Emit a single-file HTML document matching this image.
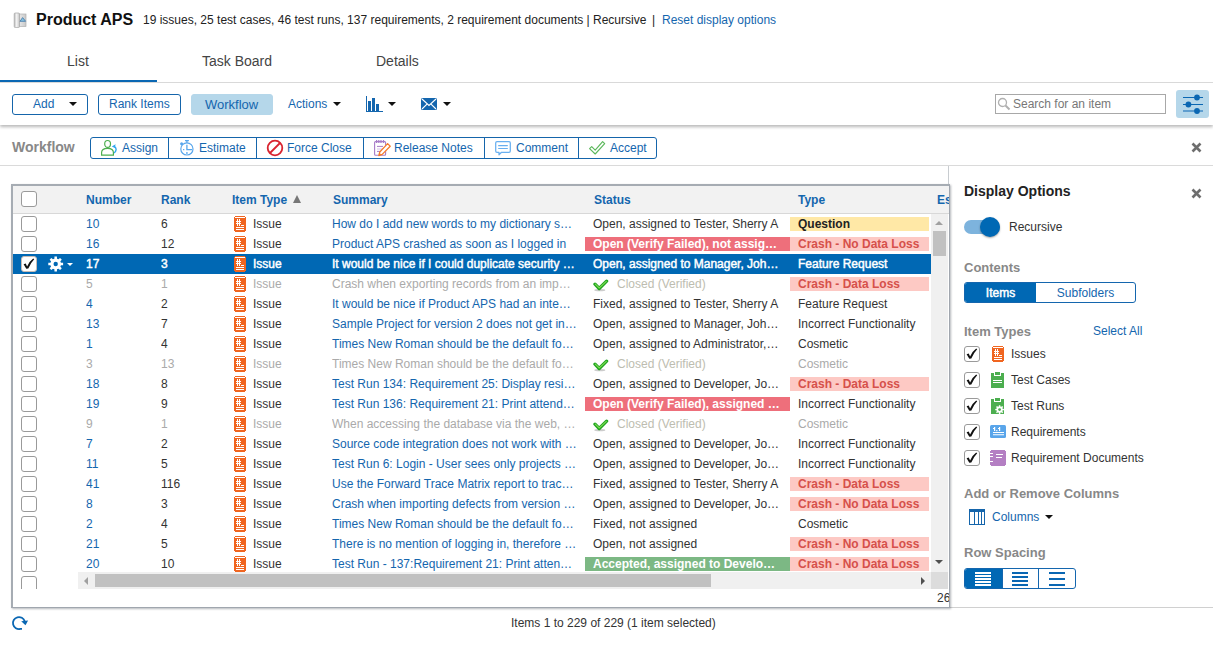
<!DOCTYPE html>
<html><head><meta charset="utf-8">
<style>
*{box-sizing:border-box;}
html,body{margin:0;padding:0;background:#fff;width:1213px;height:645px;overflow:hidden;}
body{font-family:"Liberation Sans",sans-serif;font-size:12px;color:#333;position:relative;}
.a{position:absolute;white-space:nowrap;}
.blue{color:#1466ae;}
.btn{position:absolute;height:21px;border:1px solid #1565ab;border-radius:3px;color:#1466ae;font-size:12px;line-height:19px;}
.caret{position:absolute;width:0;height:0;border-left:4px solid transparent;border-right:4px solid transparent;border-top:4px solid #111;}
/* grid */
#grid{position:absolute;left:11px;top:184px;width:939px;height:424px;border:2px solid #a6acb3;border-right:1px solid #a0a6ae;border-bottom:1px solid #a0a6ae;background:#fff;box-shadow:0.5px 0.5px 2px rgba(40,50,60,0.35);overflow:hidden;z-index:2;}
.hdr{position:absolute;left:0;top:0;width:936px;height:28px;background:#f2f2f2;border-bottom:1px solid #d8d8d8;}
.hdr span{position:absolute;top:7px;font-weight:bold;color:#1466ae;font-size:12px;line-height:14px;}
.row{position:absolute;left:0;width:919px;height:20px;font-size:12px;line-height:20px;color:#333;}
.row>span{position:absolute;top:0;height:20px;white-space:nowrap;overflow:hidden;}
.cb{position:absolute;width:16px;height:16px;border:1px solid #9a9a9a;border-radius:3px;background:#fff;}
.row .cb{left:8px;top:2px;}
.num{left:73px;width:70px;color:#1466ae;}
.rank{left:148px;width:70px;}
.it{left:221px;width:90px;}
.sum{left:319px;width:256px;color:#1466ae;}
.st{left:572px;width:205px;padding-left:8px;}
.ty{left:777px;width:139px;padding-left:8px;}
.row>span.badge{top:3px;height:14px;line-height:14px;font-weight:bold;}
.r-red{background:#ee6f7b;color:#fff;}
.r-pink{background:#fdc9c4;color:#d6504a;}
.r-yel{background:#ffe8a6;color:#222;}
.r-grn{background:#7cb884;color:#fff;}
.gray>span.num,.gray>span.rank,.gray .itxt,.gray>span.sum,.gray>span.ty:not(.badge){color:#aaa!important;}
.closed{color:#bdbdb0!important;}
.sel{background:#0068b4;}
.sel>span,.sel>span>span{color:#fff!important;-webkit-text-stroke:0.45px #fff;}
.issue{position:absolute;left:0;top:2px;}
.itxt{position:absolute;left:19px;top:0;}
/* panel */
#panel{position:absolute;left:948px;top:166px;width:265px;height:442px;border-left:1px solid #c8ccd0;border-bottom:1px solid #d0d0d0;background:#fff;}
.ph{position:absolute;left:15px;font-weight:bold;color:#888;font-size:13px;white-space:nowrap;}
.pcb{position:absolute;left:15px;width:16px;height:16px;border:1px solid #9a9a9a;border-radius:3px;background:#fff;}
.pl{position:absolute;left:62px;font-size:12px;color:#333;white-space:nowrap;}
</style></head><body>

<!-- header -->
<svg class="a" style="left:13px;top:12px" width="14" height="16" viewBox="0 0 14 16">
 <defs><linearGradient id="pg" x1="0" x2="1"><stop offset="0" stop-color="#b8b8b8"/><stop offset=".45" stop-color="#f4f4f4"/><stop offset="1" stop-color="#c4c4c4"/></linearGradient>
 <linearGradient id="pg2" x1="0" x2="1"><stop offset="0" stop-color="#e8e8e8"/><stop offset="1" stop-color="#c8c8c8"/></linearGradient></defs>
 <rect x="6" y="2" width="7" height="12.5" fill="url(#pg2)" stroke="#b0b0b0" stroke-width=".7"/>
 <rect x="1.2" y="1" width="5.3" height="14.5" rx="1" fill="url(#pg)" stroke="#a8a8a8" stroke-width=".7"/>
 <path d="M7 9.3 L9.6 5.6 L12.6 9.3 Z" fill="#86c3e0" stroke="#4d7fae" stroke-width=".9" stroke-linejoin="round"/>
</svg>
<div class="a" style="left:36px;top:10px;font-size:16px;font-weight:bold;color:#111;line-height:19px;">Product APS</div>
<div class="a" style="left:143px;top:13px;font-size:12px;color:#222;line-height:15px;">19 issues, 25 test cases, 46 test runs, 137 requirements, 2 requirement documents | Recursive</div>
<div class="a" style="left:652px;top:13px;font-size:12px;color:#222;line-height:15px;">|</div>
<div class="a blue" style="left:662px;top:13px;font-size:12px;line-height:15px;">Reset display options</div>

<!-- tabs -->
<div class="a" style="left:67px;top:53px;font-size:14px;color:#444;line-height:16px;">List</div>
<div class="a" style="left:202px;top:53px;font-size:14px;color:#444;line-height:16px;">Task Board</div>
<div class="a" style="left:376px;top:53px;font-size:14px;color:#444;line-height:16px;">Details</div>
<div class="a" style="left:0;top:82px;width:1213px;height:1px;background:#dcdcdc;"></div>
<div class="a" style="left:0;top:80px;width:157px;height:2px;background:#0a67b3;"></div>

<!-- toolbar -->
<div class="a" style="left:0;top:83px;width:1213px;height:42px;background:#fff;box-shadow:0 2px 3px rgba(0,0,0,0.28);"></div>
<div class="btn" style="left:12px;top:94px;width:76px;"><span class="a" style="left:20px;top:0;">Add</span><span class="caret" style="left:56px;top:7px;"></span></div>
<div class="btn" style="left:98px;top:94px;width:83px;"><span class="a" style="left:10px;top:0;">Rank Items</span></div>
<div class="btn" style="left:191px;top:94px;width:82px;background:#b5d7ea;border-color:#b5d7ea;"><span class="a" style="left:13px;top:0px;font-size:13px;">Workflow</span></div>
<div class="a blue" style="left:288px;top:97px;line-height:14px;">Actions</div>
<span class="caret" style="left:333px;top:102px;"></span>
<svg class="a" style="left:365px;top:96px" width="18" height="16" viewBox="0 0 18 16" shape-rendering="crispEdges">
 <rect x="1" y="0" width="1" height="16" fill="#1466ae"/><rect x="1" y="15" width="17" height="1" fill="#1466ae"/>
 <rect x="3" y="5" width="3" height="10" fill="#1466ae"/><rect x="7" y="2" width="3" height="13" fill="#1466ae"/><rect x="11" y="8" width="3" height="7" fill="#1466ae"/>
</svg>
<span class="caret" style="left:388px;top:102px;"></span>
<svg class="a" style="left:421px;top:98px" width="16" height="12" viewBox="0 0 16 12">
 <rect x="0" y="0" width="16" height="12" rx="1.5" fill="#1466ae"/>
 <path d="M1 1 L8 7.5 L15 1 M1 11 L6 6.2 M15 11 L10 6.2" fill="none" stroke="#fff" stroke-width="1.1"/>
</svg>
<span class="caret" style="left:443px;top:102px;"></span>

<div class="a" style="left:995px;top:94px;width:171px;height:20px;border:1px solid #a8a8a8;background:#fff;"></div>
<svg class="a" style="left:997px;top:97px" width="14" height="14" viewBox="0 0 14 14">
 <circle cx="5.5" cy="5.5" r="4" fill="none" stroke="#b0b0b0" stroke-width="1.3"/><path d="M8.5 8.5 L12.5 12.5" stroke="#b0b0b0" stroke-width="2"/>
</svg>
<div class="a" style="left:1013px;top:97px;color:#777;line-height:14px;">Search for an item</div>
<div class="a" style="left:1176px;top:90px;width:33px;height:28px;background:#b5d7ea;border-radius:3px;"></div>
<svg class="a" style="left:1181px;top:94px" width="24" height="20" viewBox="0 0 24 20">
 <path d="M2 3.5 H22 M2 10.5 H22 M2 17 H22" stroke="#0a67b3" stroke-width="1.1"/>
 <circle cx="16" cy="3.5" r="2.9" fill="#0a67b3"/><circle cx="7.4" cy="10.5" r="2.9" fill="#0a67b3"/><circle cx="16" cy="17" r="2.9" fill="#0a67b3"/>
</svg>

<!-- workflow bar -->
<div class="a" style="left:12px;top:139px;font-size:14px;font-weight:bold;color:#888;line-height:16px;">Workflow</div>
<div class="a" style="left:90px;top:137px;width:567px;height:22px;border:1px solid #1565ab;border-radius:3px;"></div>
<div class="a" style="left:168px;top:137px;width:1px;height:22px;background:#1565ab;"></div>
<div class="a" style="left:256px;top:137px;width:1px;height:22px;background:#1565ab;"></div>
<div class="a" style="left:363px;top:137px;width:1px;height:22px;background:#1565ab;"></div>
<div class="a" style="left:484px;top:137px;width:1px;height:22px;background:#1565ab;"></div>
<div class="a" style="left:578px;top:137px;width:1px;height:22px;background:#1565ab;"></div>
<div class="a blue" style="left:122px;top:141px;line-height:14px;">Assign</div>
<div class="a blue" style="left:199px;top:141px;line-height:14px;">Estimate</div>
<div class="a blue" style="left:287px;top:141px;line-height:14px;">Force Close</div>
<div class="a blue" style="left:394px;top:141px;line-height:14px;">Release Notes</div>
<div class="a blue" style="left:516px;top:141px;line-height:14px;">Comment</div>
<div class="a blue" style="left:610px;top:141px;line-height:14px;">Accept</div>
<!-- icons -->
<svg class="a" style="left:100px;top:139px" width="18" height="18" viewBox="0 0 18 18">
 <ellipse cx="7.6" cy="4.9" rx="2.9" ry="3.4" fill="none" stroke="#4cae4f" stroke-width="1.2"/>
 <path d="M1.6 16.2 V13.5 Q1.6 9.4 7.6 9.4 Q13.4 9.4 13.4 13.5 V16.2 Z" fill="none" stroke="#4cae4f" stroke-width="1.2"/>
 <path d="M14.2 14 Q18 10.5 14.3 7.3" fill="none" stroke="#2ea7ef" stroke-width="1.4"/><path d="M11.8 7.4 L15.6 5.3 L14.8 9.1 Z" fill="#2ea7ef"/>
</svg>
<svg class="a" style="left:179px;top:139px" width="17" height="18" viewBox="0 0 17 18">
 <circle cx="7.9" cy="9.9" r="6.1" fill="none" stroke="#58a6ec" stroke-width="1.2"/>
 <path d="M6 1.6 H9.9 M7.9 1.8 V3.8 M7.9 5.8 V10.6 H13 M4.1 10.6 H5.3" fill="none" stroke="#58a6ec" stroke-width="1.3"/>
 <circle cx="2.6" cy="4.8" r="1.5" fill="#58a6ec"/><rect x="7.1" y="13.2" width="1.6" height="1.6" fill="#58a6ec"/>
</svg>
<svg class="a" style="left:266px;top:139px" width="18" height="18" viewBox="0 0 18 18">
 <circle cx="9" cy="9" r="7.3" fill="none" stroke="#d9232f" stroke-width="1.8"/><path d="M4 14 L14 4" stroke="#d9232f" stroke-width="1.8"/>
</svg>
<svg class="a" style="left:373px;top:139px" width="18" height="18" viewBox="0 0 18 18">
 <rect x="1.6" y="2.6" width="11" height="13.6" rx="1" fill="#fff" stroke="#a77cc8" stroke-width="1.1"/>
 <path d="M3.6 1 V4 M5.8 1 V4 M8 1 V4 M10.5 1 V4" stroke="#a77cc8" stroke-width="1.2"/>
 <path d="M4 7.4 H10 M4 12.4 H8" stroke="#a77cc8" stroke-width="1"/><path d="M4 10 H10" stroke="#d6c2e6" stroke-width="1"/>
 <path d="M14.6 4.6 L17.2 7.2 L9.2 15.4 L5.8 16.6 L6.8 13 Z" fill="#fff" stroke="#f57c2c" stroke-width="1.3" stroke-linejoin="round"/>
 <path d="M5.8 16.6 L6.6 14 L8.4 15.8 Z" fill="#f57c2c"/>
</svg>
<svg class="a" style="left:494px;top:139px" width="18" height="18" viewBox="0 0 18 18">
 <path d="M3 2.7 H15 Q16.3 2.7 16.3 4 V12 Q16.3 13.3 15 13.3 H7.5 L5 15.8 V13.3 H3 Q1.7 13.3 1.7 12 V4 Q1.7 2.7 3 2.7 Z" fill="none" stroke="#68aff0" stroke-width="1.25" stroke-linejoin="round"/>
 <path d="M4.2 6.6 H13.8 M4.2 9.5 H13.8" stroke="#68aff0" stroke-width="1.1"/>
</svg>
<svg class="a" style="left:588px;top:139px" width="18" height="18" viewBox="0 0 18 18">
 <path d="M1.6 9.6 L3.7 7.6 L7.2 11.1 L14.6 2.6 L16.7 4.6 L7.2 15 Z" fill="none" stroke="#5cb85c" stroke-width="1.15" stroke-linejoin="round"/>
</svg>
<div class="a" style="left:0;top:165px;width:1213px;height:1px;background:#dadada;"></div>
<svg class="a" style="left:1191px;top:142px" width="11" height="11" viewBox="0 0 11 11"><path d="M1.5 1.5 L9.5 9.5 M9.5 1.5 L1.5 9.5" stroke="#6e6e6e" stroke-width="2.6"/></svg>

<!-- GRID -->
<div id="grid">
 <div class="hdr">
  <div class="cb" style="left:8px;top:5px;"></div>
  <span style="left:73px;">Number</span>
  <span style="left:148px;">Rank</span>
  <span style="left:219px;">Item Type</span>
  <span style="left:320px;">Summary</span>
  <span style="left:581px;">Status</span>
  <span style="left:785px;">Type</span>
  <span style="left:924px;">Es</span>
 </div>
 <div class="a" style="left:0;top:0;width:935px;height:403px;overflow:hidden;"><div class="row" style="top:28px;"><span class="num">10</span><span class="rank">6</span><span class="it"><svg class="issue" width="12" height="16" viewBox="0 0 12 16" shape-rendering="crispEdges"><path d="M1 0H11V1H12V15H11V16H1V15H0V1H1Z" fill="#f06520"/><path d="M1 1h10v1H1z M3 3h1v7H3z M5 3h1v7H5z M2 5h5v1H2z M2 7h5v1H2z M7 9h3v1H7z M2 11h8v1H2z M2 13h8v1H2z" fill="#fff"/></svg><span class="itxt">Issue</span></span><span class="sum">How do I add new words to my dictionary s…</span><span class="st">Open, assigned to Tester, Sherry A</span><span class="ty badge r-yel">Question</span></div>
<div class="row" style="top:48px;"><span class="num">16</span><span class="rank">12</span><span class="it"><svg class="issue" width="12" height="16" viewBox="0 0 12 16" shape-rendering="crispEdges"><path d="M1 0H11V1H12V15H11V16H1V15H0V1H1Z" fill="#f06520"/><path d="M1 1h10v1H1z M3 3h1v7H3z M5 3h1v7H5z M2 5h5v1H2z M2 7h5v1H2z M7 9h3v1H7z M2 11h8v1H2z M2 13h8v1H2z" fill="#fff"/></svg><span class="itxt">Issue</span></span><span class="sum">Product APS crashed as soon as I logged in</span><span class="st badge r-red">Open (Verify Failed), not assig…</span><span class="ty badge r-pink">Crash - No Data Loss</span></div>
<div class="row sel" style="top:68px;"><span class="num">17</span><span class="rank">3</span><span class="it"><svg class="issue" width="12" height="16" viewBox="0 0 12 16" shape-rendering="crispEdges"><path d="M1 0H11V1H12V15H11V16H1V15H0V1H1Z" fill="#f06520"/><path d="M1 1h10v1H1z M3 3h1v7H3z M5 3h1v7H5z M2 5h5v1H2z M2 7h5v1H2z M7 9h3v1H7z M2 11h8v1H2z M2 13h8v1H2z" fill="#fff"/></svg><span class="itxt">Issue</span></span><span class="sum">It would be nice if I could duplicate security …</span><span class="st">Open, assigned to Manager, Joh…</span><span class="ty">Feature Request</span></div>
<div class="row gray" style="top:88px;"><span class="num">5</span><span class="rank">1</span><span class="it"><svg class="issue" width="12" height="16" viewBox="0 0 12 16" shape-rendering="crispEdges"><path d="M1 0H11V1H12V15H11V16H1V15H0V1H1Z" fill="#f06520"/><path d="M1 1h10v1H1z M3 3h1v7H3z M5 3h1v7H5z M2 5h5v1H2z M2 7h5v1H2z M7 9h3v1H7z M2 11h8v1H2z M2 13h8v1H2z" fill="#fff"/></svg><span class="itxt">Issue</span></span><span class="sum">Crash when exporting records from an imp…</span><span class="st"><svg style="position:absolute;left:8px;top:5px" width="17" height="13" viewBox="0 0 17 13"><ellipse cx="6.8" cy="11.2" rx="5.5" ry="1.1" fill="#000" opacity=".2"/><path d="M2 5.2 L6.2 9.5 L13.6 2.2" fill="none" stroke="#1fa51f" stroke-width="3.3" stroke-linecap="round" stroke-linejoin="round"/><path d="M2.3 5.1 L6.2 8.9 L13.3 2.3" fill="none" stroke="#8ee45c" stroke-width="1.1" stroke-linecap="round" opacity=".85"/></svg><span class="closed" style="position:absolute;left:32px;top:0;">Closed (Verified)</span></span><span class="ty badge r-pink">Crash - Data Loss</span></div>
<div class="row" style="top:108px;"><span class="num">4</span><span class="rank">2</span><span class="it"><svg class="issue" width="12" height="16" viewBox="0 0 12 16" shape-rendering="crispEdges"><path d="M1 0H11V1H12V15H11V16H1V15H0V1H1Z" fill="#f06520"/><path d="M1 1h10v1H1z M3 3h1v7H3z M5 3h1v7H5z M2 5h5v1H2z M2 7h5v1H2z M7 9h3v1H7z M2 11h8v1H2z M2 13h8v1H2z" fill="#fff"/></svg><span class="itxt">Issue</span></span><span class="sum">It would be nice if Product APS had an inte…</span><span class="st">Fixed, assigned to Tester, Sherry A</span><span class="ty">Feature Request</span></div>
<div class="row" style="top:128px;"><span class="num">13</span><span class="rank">7</span><span class="it"><svg class="issue" width="12" height="16" viewBox="0 0 12 16" shape-rendering="crispEdges"><path d="M1 0H11V1H12V15H11V16H1V15H0V1H1Z" fill="#f06520"/><path d="M1 1h10v1H1z M3 3h1v7H3z M5 3h1v7H5z M2 5h5v1H2z M2 7h5v1H2z M7 9h3v1H7z M2 11h8v1H2z M2 13h8v1H2z" fill="#fff"/></svg><span class="itxt">Issue</span></span><span class="sum">Sample Project for version 2 does not get in…</span><span class="st">Open, assigned to Manager, Joh…</span><span class="ty">Incorrect Functionality</span></div>
<div class="row" style="top:148px;"><span class="num">1</span><span class="rank">4</span><span class="it"><svg class="issue" width="12" height="16" viewBox="0 0 12 16" shape-rendering="crispEdges"><path d="M1 0H11V1H12V15H11V16H1V15H0V1H1Z" fill="#f06520"/><path d="M1 1h10v1H1z M3 3h1v7H3z M5 3h1v7H5z M2 5h5v1H2z M2 7h5v1H2z M7 9h3v1H7z M2 11h8v1H2z M2 13h8v1H2z" fill="#fff"/></svg><span class="itxt">Issue</span></span><span class="sum">Times New Roman should be the default fo…</span><span class="st">Open, assigned to Administrator,…</span><span class="ty">Cosmetic</span></div>
<div class="row gray" style="top:168px;"><span class="num">3</span><span class="rank">13</span><span class="it"><svg class="issue" width="12" height="16" viewBox="0 0 12 16" shape-rendering="crispEdges"><path d="M1 0H11V1H12V15H11V16H1V15H0V1H1Z" fill="#f06520"/><path d="M1 1h10v1H1z M3 3h1v7H3z M5 3h1v7H5z M2 5h5v1H2z M2 7h5v1H2z M7 9h3v1H7z M2 11h8v1H2z M2 13h8v1H2z" fill="#fff"/></svg><span class="itxt">Issue</span></span><span class="sum">Times New Roman should be the default fo…</span><span class="st"><svg style="position:absolute;left:8px;top:5px" width="17" height="13" viewBox="0 0 17 13"><ellipse cx="6.8" cy="11.2" rx="5.5" ry="1.1" fill="#000" opacity=".2"/><path d="M2 5.2 L6.2 9.5 L13.6 2.2" fill="none" stroke="#1fa51f" stroke-width="3.3" stroke-linecap="round" stroke-linejoin="round"/><path d="M2.3 5.1 L6.2 8.9 L13.3 2.3" fill="none" stroke="#8ee45c" stroke-width="1.1" stroke-linecap="round" opacity=".85"/></svg><span class="closed" style="position:absolute;left:32px;top:0;">Closed (Verified)</span></span><span class="ty">Cosmetic</span></div>
<div class="row" style="top:188px;"><span class="num">18</span><span class="rank">8</span><span class="it"><svg class="issue" width="12" height="16" viewBox="0 0 12 16" shape-rendering="crispEdges"><path d="M1 0H11V1H12V15H11V16H1V15H0V1H1Z" fill="#f06520"/><path d="M1 1h10v1H1z M3 3h1v7H3z M5 3h1v7H5z M2 5h5v1H2z M2 7h5v1H2z M7 9h3v1H7z M2 11h8v1H2z M2 13h8v1H2z" fill="#fff"/></svg><span class="itxt">Issue</span></span><span class="sum">Test Run 134: Requirement 25: Display resi…</span><span class="st">Open, assigned to Developer, Jo…</span><span class="ty badge r-pink">Crash - Data Loss</span></div>
<div class="row" style="top:208px;"><span class="num">19</span><span class="rank">9</span><span class="it"><svg class="issue" width="12" height="16" viewBox="0 0 12 16" shape-rendering="crispEdges"><path d="M1 0H11V1H12V15H11V16H1V15H0V1H1Z" fill="#f06520"/><path d="M1 1h10v1H1z M3 3h1v7H3z M5 3h1v7H5z M2 5h5v1H2z M2 7h5v1H2z M7 9h3v1H7z M2 11h8v1H2z M2 13h8v1H2z" fill="#fff"/></svg><span class="itxt">Issue</span></span><span class="sum">Test Run 136: Requirement 21: Print attend…</span><span class="st badge r-red">Open (Verify Failed), assigned …</span><span class="ty">Incorrect Functionality</span></div>
<div class="row gray" style="top:228px;"><span class="num">9</span><span class="rank">1</span><span class="it"><svg class="issue" width="12" height="16" viewBox="0 0 12 16" shape-rendering="crispEdges"><path d="M1 0H11V1H12V15H11V16H1V15H0V1H1Z" fill="#f06520"/><path d="M1 1h10v1H1z M3 3h1v7H3z M5 3h1v7H5z M2 5h5v1H2z M2 7h5v1H2z M7 9h3v1H7z M2 11h8v1H2z M2 13h8v1H2z" fill="#fff"/></svg><span class="itxt">Issue</span></span><span class="sum">When accessing the database via the web, …</span><span class="st"><svg style="position:absolute;left:8px;top:5px" width="17" height="13" viewBox="0 0 17 13"><ellipse cx="6.8" cy="11.2" rx="5.5" ry="1.1" fill="#000" opacity=".2"/><path d="M2 5.2 L6.2 9.5 L13.6 2.2" fill="none" stroke="#1fa51f" stroke-width="3.3" stroke-linecap="round" stroke-linejoin="round"/><path d="M2.3 5.1 L6.2 8.9 L13.3 2.3" fill="none" stroke="#8ee45c" stroke-width="1.1" stroke-linecap="round" opacity=".85"/></svg><span class="closed" style="position:absolute;left:32px;top:0;">Closed (Verified)</span></span><span class="ty">Cosmetic</span></div>
<div class="row" style="top:248px;"><span class="num">7</span><span class="rank">2</span><span class="it"><svg class="issue" width="12" height="16" viewBox="0 0 12 16" shape-rendering="crispEdges"><path d="M1 0H11V1H12V15H11V16H1V15H0V1H1Z" fill="#f06520"/><path d="M1 1h10v1H1z M3 3h1v7H3z M5 3h1v7H5z M2 5h5v1H2z M2 7h5v1H2z M7 9h3v1H7z M2 11h8v1H2z M2 13h8v1H2z" fill="#fff"/></svg><span class="itxt">Issue</span></span><span class="sum">Source code integration does not work with …</span><span class="st">Open, assigned to Developer, Jo…</span><span class="ty">Incorrect Functionality</span></div>
<div class="row" style="top:268px;"><span class="num">11</span><span class="rank">5</span><span class="it"><svg class="issue" width="12" height="16" viewBox="0 0 12 16" shape-rendering="crispEdges"><path d="M1 0H11V1H12V15H11V16H1V15H0V1H1Z" fill="#f06520"/><path d="M1 1h10v1H1z M3 3h1v7H3z M5 3h1v7H5z M2 5h5v1H2z M2 7h5v1H2z M7 9h3v1H7z M2 11h8v1H2z M2 13h8v1H2z" fill="#fff"/></svg><span class="itxt">Issue</span></span><span class="sum">Test Run 6: Login - User sees only projects …</span><span class="st">Open, assigned to Developer, Jo…</span><span class="ty">Incorrect Functionality</span></div>
<div class="row" style="top:288px;"><span class="num">41</span><span class="rank">116</span><span class="it"><svg class="issue" width="12" height="16" viewBox="0 0 12 16" shape-rendering="crispEdges"><path d="M1 0H11V1H12V15H11V16H1V15H0V1H1Z" fill="#f06520"/><path d="M1 1h10v1H1z M3 3h1v7H3z M5 3h1v7H5z M2 5h5v1H2z M2 7h5v1H2z M7 9h3v1H7z M2 11h8v1H2z M2 13h8v1H2z" fill="#fff"/></svg><span class="itxt">Issue</span></span><span class="sum">Use the Forward Trace Matrix report to trac…</span><span class="st">Fixed, assigned to Tester, Sherry A</span><span class="ty badge r-pink">Crash - Data Loss</span></div>
<div class="row" style="top:308px;"><span class="num">8</span><span class="rank">3</span><span class="it"><svg class="issue" width="12" height="16" viewBox="0 0 12 16" shape-rendering="crispEdges"><path d="M1 0H11V1H12V15H11V16H1V15H0V1H1Z" fill="#f06520"/><path d="M1 1h10v1H1z M3 3h1v7H3z M5 3h1v7H5z M2 5h5v1H2z M2 7h5v1H2z M7 9h3v1H7z M2 11h8v1H2z M2 13h8v1H2z" fill="#fff"/></svg><span class="itxt">Issue</span></span><span class="sum">Crash when importing defects from version …</span><span class="st">Open, assigned to Developer, Jo…</span><span class="ty badge r-pink">Crash - No Data Loss</span></div>
<div class="row" style="top:328px;"><span class="num">2</span><span class="rank">4</span><span class="it"><svg class="issue" width="12" height="16" viewBox="0 0 12 16" shape-rendering="crispEdges"><path d="M1 0H11V1H12V15H11V16H1V15H0V1H1Z" fill="#f06520"/><path d="M1 1h10v1H1z M3 3h1v7H3z M5 3h1v7H5z M2 5h5v1H2z M2 7h5v1H2z M7 9h3v1H7z M2 11h8v1H2z M2 13h8v1H2z" fill="#fff"/></svg><span class="itxt">Issue</span></span><span class="sum">Times New Roman should be the default fo…</span><span class="st">Fixed, not assigned</span><span class="ty">Cosmetic</span></div>
<div class="row" style="top:348px;"><span class="num">21</span><span class="rank">5</span><span class="it"><svg class="issue" width="12" height="16" viewBox="0 0 12 16" shape-rendering="crispEdges"><path d="M1 0H11V1H12V15H11V16H1V15H0V1H1Z" fill="#f06520"/><path d="M1 1h10v1H1z M3 3h1v7H3z M5 3h1v7H5z M2 5h5v1H2z M2 7h5v1H2z M7 9h3v1H7z M2 11h8v1H2z M2 13h8v1H2z" fill="#fff"/></svg><span class="itxt">Issue</span></span><span class="sum">There is no mention of logging in, therefore …</span><span class="st">Open, not assigned</span><span class="ty badge r-pink">Crash - No Data Loss</span></div>
<div class="row" style="top:368px;"><span class="num">20</span><span class="rank">10</span><span class="it"><svg class="issue" width="12" height="16" viewBox="0 0 12 16" shape-rendering="crispEdges"><path d="M1 0H11V1H12V15H11V16H1V15H0V1H1Z" fill="#f06520"/><path d="M1 1h10v1H1z M3 3h1v7H3z M5 3h1v7H5z M2 5h5v1H2z M2 7h5v1H2z M7 9h3v1H7z M2 11h8v1H2z M2 13h8v1H2z" fill="#fff"/></svg><span class="itxt">Issue</span></span><span class="sum">Test Run - 137:Requirement 21: Print atten…</span><span class="st badge r-grn">Accepted, assigned to Develo…</span><span class="ty badge r-pink">Crash - No Data Loss</span></div>
<div class="cb" style="left:8px;top:30px;"></div>
<div class="cb" style="left:8px;top:50px;"></div>
<div class="a" style="left:0;top:68px;width:65px;height:20px;background:#0068b4;"></div>
<div class="cb" style="left:8px;top:70px;border-color:#c8bcb4;"><svg width="16" height="16" viewBox="0 0 16 16" style="position:absolute;left:-1px;top:-1px"><path d="M2.6 8.2 L4.7 7.5 L6.1 10.4 Q8.4 5.2 12.2 2.5 L13.2 3.2 Q9.8 6.6 7.3 12.6 L5.3 12.8 Z" fill="#111"/></svg></div>

<div class="cb" style="left:8px;top:90px;"></div>
<div class="cb" style="left:8px;top:110px;"></div>
<div class="cb" style="left:8px;top:130px;"></div>
<div class="cb" style="left:8px;top:150px;"></div>
<div class="cb" style="left:8px;top:170px;"></div>
<div class="cb" style="left:8px;top:190px;"></div>
<div class="cb" style="left:8px;top:210px;"></div>
<div class="cb" style="left:8px;top:230px;"></div>
<div class="cb" style="left:8px;top:250px;"></div>
<div class="cb" style="left:8px;top:270px;"></div>
<div class="cb" style="left:8px;top:290px;"></div>
<div class="cb" style="left:8px;top:310px;"></div>
<div class="cb" style="left:8px;top:330px;"></div>
<div class="cb" style="left:8px;top:350px;"></div>
<div class="cb" style="left:8px;top:370px;"></div>
<div class="cb" style="left:8px;top:390px;"></div><svg class="a" style="left:35px;top:70px" width="16" height="16" viewBox="0 0 16 16"><polygon points="12.94,6.70 15.10,6.77 15.10,9.23 12.94,9.30 12.33,10.79 13.80,12.36 12.06,14.10 10.49,12.63 9.00,13.24 8.93,15.40 6.47,15.40 6.40,13.24 4.91,12.63 3.34,14.10 1.60,12.36 3.07,10.79 2.46,9.30 0.30,9.23 0.30,6.77 2.46,6.70 3.07,5.21 1.60,3.64 3.34,1.90 4.91,3.37 6.40,2.76 6.47,0.60 8.93,0.60 9.00,2.76 10.49,3.37 12.06,1.90 13.80,3.64 12.33,5.21" fill="#fff"/><circle cx="7.7" cy="8" r="2.2" fill="#0068b4"/></svg><div class="a" style="left:54px;top:77px;width:0;height:0;border-left:3px solid transparent;border-right:3px solid transparent;border-top:3px solid #fff;"></div></div><div class="a" style="left:280px;top:9px;width:0;height:0;border-left:4.5px solid transparent;border-right:4.5px solid transparent;border-bottom:8px solid #777;"></div>
 <!-- vscroll -->
 <div class="a" style="left:918px;top:28px;width:17px;height:358px;background:#f0f0f0;"></div>
 <div class="a" style="left:922px;top:35px;width:0;height:0;border-left:4px solid transparent;border-right:4px solid transparent;border-bottom:4px solid #a0a0a0;"></div>
 <div class="a" style="left:920px;top:45px;width:13px;height:25px;background:#c1c1c1;"></div>
 <div class="a" style="left:922px;top:374px;width:0;height:0;border-left:4px solid transparent;border-right:4px solid transparent;border-top:4px solid #505050;"></div>
 <!-- hscroll -->
 <div class="a" style="left:65px;top:386px;width:853px;height:17px;background:#f0f0f0;"></div>
 <div class="a" style="left:71px;top:391px;width:0;height:0;border-top:4px solid transparent;border-bottom:4px solid transparent;border-right:4px solid #a0a0a0;"></div>
 <div class="a" style="left:82px;top:388px;width:616px;height:13px;background:#c1c1c1;"></div>
 <div class="a" style="left:908px;top:391px;width:0;height:0;border-top:4px solid transparent;border-bottom:4px solid transparent;border-left:4px solid #505050;"></div>
 <div class="a" style="left:918px;top:386px;width:17px;height:17px;background:#dcdcdc;"></div>
 <div class="a" style="left:924px;top:405px;line-height:14px;color:#333;">26</div>
</div>

<!-- footer -->
<svg class="a" style="left:8px;top:612px" width="24" height="24" viewBox="0 0 24 24">
 <path d="M14 16.9 H12.3 A6 6 0 1 1 16.7 9.3" fill="none" stroke="#0a67b3" stroke-width="1.8"/>
 <path d="M13.2 9.3 L20.1 8.4 L17.5 13.2 Z" fill="#0a67b3"/>
</svg>
<div class="a" style="left:511px;top:616px;line-height:14px;color:#333;">Items 1 to 229 of 229 (1 item selected)</div>

<!-- PANEL -->
<div id="panel">
 <div class="a" style="left:15px;top:17px;font-size:14px;font-weight:bold;color:#222;line-height:16px;">Display Options</div>
 <svg class="a" style="left:242px;top:22px" width="11" height="11" viewBox="0 0 11 11"><path d="M1.5 1.5 L9.5 9.5 M9.5 1.5 L1.5 9.5" stroke="#6e6e6e" stroke-width="2.6"/></svg>
 <div class="a" style="left:15px;top:54px;width:36px;height:14px;border-radius:7px;background:#7db3dd;"></div>
 <div class="a" style="left:31px;top:51px;width:20px;height:20px;border-radius:10px;background:#0068b4;box-shadow:0 1px 2px rgba(0,0,0,.35);"></div>
 <div class="a" style="left:60px;top:54px;font-size:12px;line-height:14px;color:#333;">Recursive</div>
 <div class="ph" style="top:94px;line-height:15px;">Contents</div>
 <div class="a" style="left:15px;top:116px;width:172px;height:21px;border:1px solid #1466ae;border-radius:3px;overflow:hidden;">
   <div class="a" style="left:0;top:0;width:71px;height:19px;background:#0068b4;color:#fff;-webkit-text-stroke:0.45px #fff;line-height:20px;text-align:center;">Items</div>
   <div class="a" style="left:71px;top:0;width:99px;height:19px;color:#1466ae;line-height:20px;text-align:center;">Subfolders</div>
 </div>
 <div class="ph" style="top:158px;line-height:15px;">Item Types</div>
 <div class="a blue" style="left:144px;top:158px;line-height:14px;">Select All</div>
 <div class="pcb" style="top:180px;"><svg width="16" height="16" viewBox="0 0 16 16" style="position:absolute;left:-1px;top:-1px"><path d="M2.6 8.2 L4.7 7.5 L6.1 10.4 Q8.4 5.2 12.2 2.5 L13.2 3.2 Q9.8 6.6 7.3 12.6 L5.3 12.8 Z" fill="#111"/></svg></div>
<svg class="a" style="left:43px;top:180px" width="12" height="16" viewBox="0 0 12 16" shape-rendering="crispEdges"><path d="M1 0H11V1H12V15H11V16H1V15H0V1H1Z" fill="#f06520"/><path d="M1 1h10v1H1z M3 3h1v7H3z M5 3h1v7H5z M2 5h5v1H2z M2 7h5v1H2z M7 9h3v1H7z M2 11h8v1H2z M2 13h8v1H2z" fill="#fff"/></svg>
<div class="pl" style="top:181px;line-height:14px;">Issues</div>
<div class="pcb" style="top:206px;"><svg width="16" height="16" viewBox="0 0 16 16" style="position:absolute;left:-1px;top:-1px"><path d="M2.6 8.2 L4.7 7.5 L6.1 10.4 Q8.4 5.2 12.2 2.5 L13.2 3.2 Q9.8 6.6 7.3 12.6 L5.3 12.8 Z" fill="#111"/></svg></div>
<svg class="a" style="left:42px;top:206px" width="14" height="16" viewBox="0 0 14 16" shape-rendering="crispEdges"><path d="M0 1H3V4H10V1H13V16H0Z" fill="#4cae4f"/><path d="M4 0H9V3H4Z" fill="#4cae4f"/><path d="M3 3h1v1H3z M9 3h1v1H9z" fill="#fff"/><path d="M2 8h9v1H2z M2 10h9v1H2z" fill="#fff"/></svg>
<div class="pl" style="top:207px;line-height:14px;">Test Cases</div>
<div class="pcb" style="top:232px;"><svg width="16" height="16" viewBox="0 0 16 16" style="position:absolute;left:-1px;top:-1px"><path d="M2.6 8.2 L4.7 7.5 L6.1 10.4 Q8.4 5.2 12.2 2.5 L13.2 3.2 Q9.8 6.6 7.3 12.6 L5.3 12.8 Z" fill="#111"/></svg></div>
<svg class="a" style="left:42px;top:232px" width="14" height="16" viewBox="0 0 14 16"><path d="M0 1H3V4H10V1H13V16H0Z" fill="#4cae4f" shape-rendering="crispEdges"/><path d="M4 0H9V3H4Z" fill="#4cae4f" shape-rendering="crispEdges"/><polygon points="11.71,10.83 12.94,10.88 12.94,12.32 11.71,12.37 11.34,13.25 12.18,14.16 11.16,15.18 10.25,14.34 9.37,14.71 9.32,15.94 7.88,15.94 7.83,14.71 6.95,14.34 6.04,15.18 5.02,14.16 5.86,13.25 5.49,12.37 4.26,12.32 4.26,10.88 5.49,10.83 5.86,9.95 5.02,9.04 6.04,8.02 6.95,8.86 7.83,8.49 7.88,7.26 9.32,7.26 9.37,8.49 10.25,8.86 11.16,8.02 12.18,9.04 11.34,9.95" fill="#fff"/><circle cx="8.6" cy="11.6" r="1.4" fill="#4cae4f"/></svg>
<div class="pl" style="top:233px;line-height:14px;">Test Runs</div>
<div class="pcb" style="top:258px;"><svg width="16" height="16" viewBox="0 0 16 16" style="position:absolute;left:-1px;top:-1px"><path d="M2.6 8.2 L4.7 7.5 L6.1 10.4 Q8.4 5.2 12.2 2.5 L13.2 3.2 Q9.8 6.6 7.3 12.6 L5.3 12.8 Z" fill="#111"/></svg></div>
<svg class="a" style="left:41px;top:259px" width="16" height="13" viewBox="0 0 16 13"><rect x="0" y="0" width="16" height="13" rx="1.5" fill="#59a5ea"/><path d="M4 2h1.2v4H4z M3 3h1v1H3z M6.2 5h1.2v1.2H6.2z M9 2h1.2v4H9z M8 3h1v1H8z M3 7h11v1.1H3z M3 9.2h11v1.1H3z" fill="#fff"/></svg>
<div class="pl" style="top:259px;line-height:14px;">Requirements</div>
<div class="pcb" style="top:284px;"><svg width="16" height="16" viewBox="0 0 16 16" style="position:absolute;left:-1px;top:-1px"><path d="M2.6 8.2 L4.7 7.5 L6.1 10.4 Q8.4 5.2 12.2 2.5 L13.2 3.2 Q9.8 6.6 7.3 12.6 L5.3 12.8 Z" fill="#111"/></svg></div>
<svg class="a" style="left:41px;top:284px" width="16" height="16" viewBox="0 0 16 16" shape-rendering="crispEdges"><path d="M1 0H15V1H16V15H15V16H1V15H0V1H1Z" fill="#b47fc3"/><path d="M0 3h3v1H0z M0 6h3v1H0z M0 11h3v1H0z M6 4h7v1H6z M6 7h6v1H6z" fill="#fff"/></svg>
<div class="pl" style="top:285px;line-height:14px;">Requirement Documents</div>
 <div class="ph" style="top:320px;line-height:15px;">Add or Remove Columns</div>
 <svg class="a" style="left:20px;top:343px" width="16" height="16" viewBox="0 0 16 16" shape-rendering="crispEdges"><path d="M0 0h16v3H0z M0 0h1v16H0z M15 0h1v16h-1z M0 15h16v1H0z M5 0h1v16H5z M9 0h1v16H9z M12 0h1v16h-1z" fill="#1565ab"/></svg>
 <div class="a blue" style="left:43px;top:344px;line-height:14px;">Columns</div>
 <span class="caret" style="left:96px;top:349px;"></span>
 <div class="ph" style="top:379px;line-height:15px;">Row Spacing</div>
 <div class="a" style="left:15px;top:402px;width:112px;height:21px;border:1px solid #1466ae;border-radius:3px;overflow:hidden;">
   <div class="a" style="left:0;top:0;width:37px;height:19px;background:#0068b4;"></div>
   <div class="a" style="left:37px;top:0;width:1px;height:19px;background:#1466ae;"></div>
   <div class="a" style="left:73px;top:0;width:1px;height:19px;background:#1466ae;"></div>
   <svg class="a" style="left:10px;top:3px" width="16" height="14" viewBox="0 0 16 14" shape-rendering="crispEdges"><path d="M0 0h16v2H0z M0 3h16v2H0z M0 6h16v2H0z M0 9h16v2H0z M0 12h16v2H0z" fill="#fff"/></svg>
   <svg class="a" style="left:47px;top:3px" width="16" height="14" viewBox="0 0 16 14" shape-rendering="crispEdges"><path d="M0 0h16v2H0z M0 4h16v2H0z M0 8h16v2H0z M0 12h16v2H0z" fill="#0a67b3"/></svg>
   <svg class="a" style="left:84px;top:3px" width="16" height="14" viewBox="0 0 16 14" shape-rendering="crispEdges"><path d="M0 0h16v2H0z M0 6h16v2H0z M0 12h16v2H0z" fill="#0a67b3"/></svg>
 </div>
</div>
</body></html>
